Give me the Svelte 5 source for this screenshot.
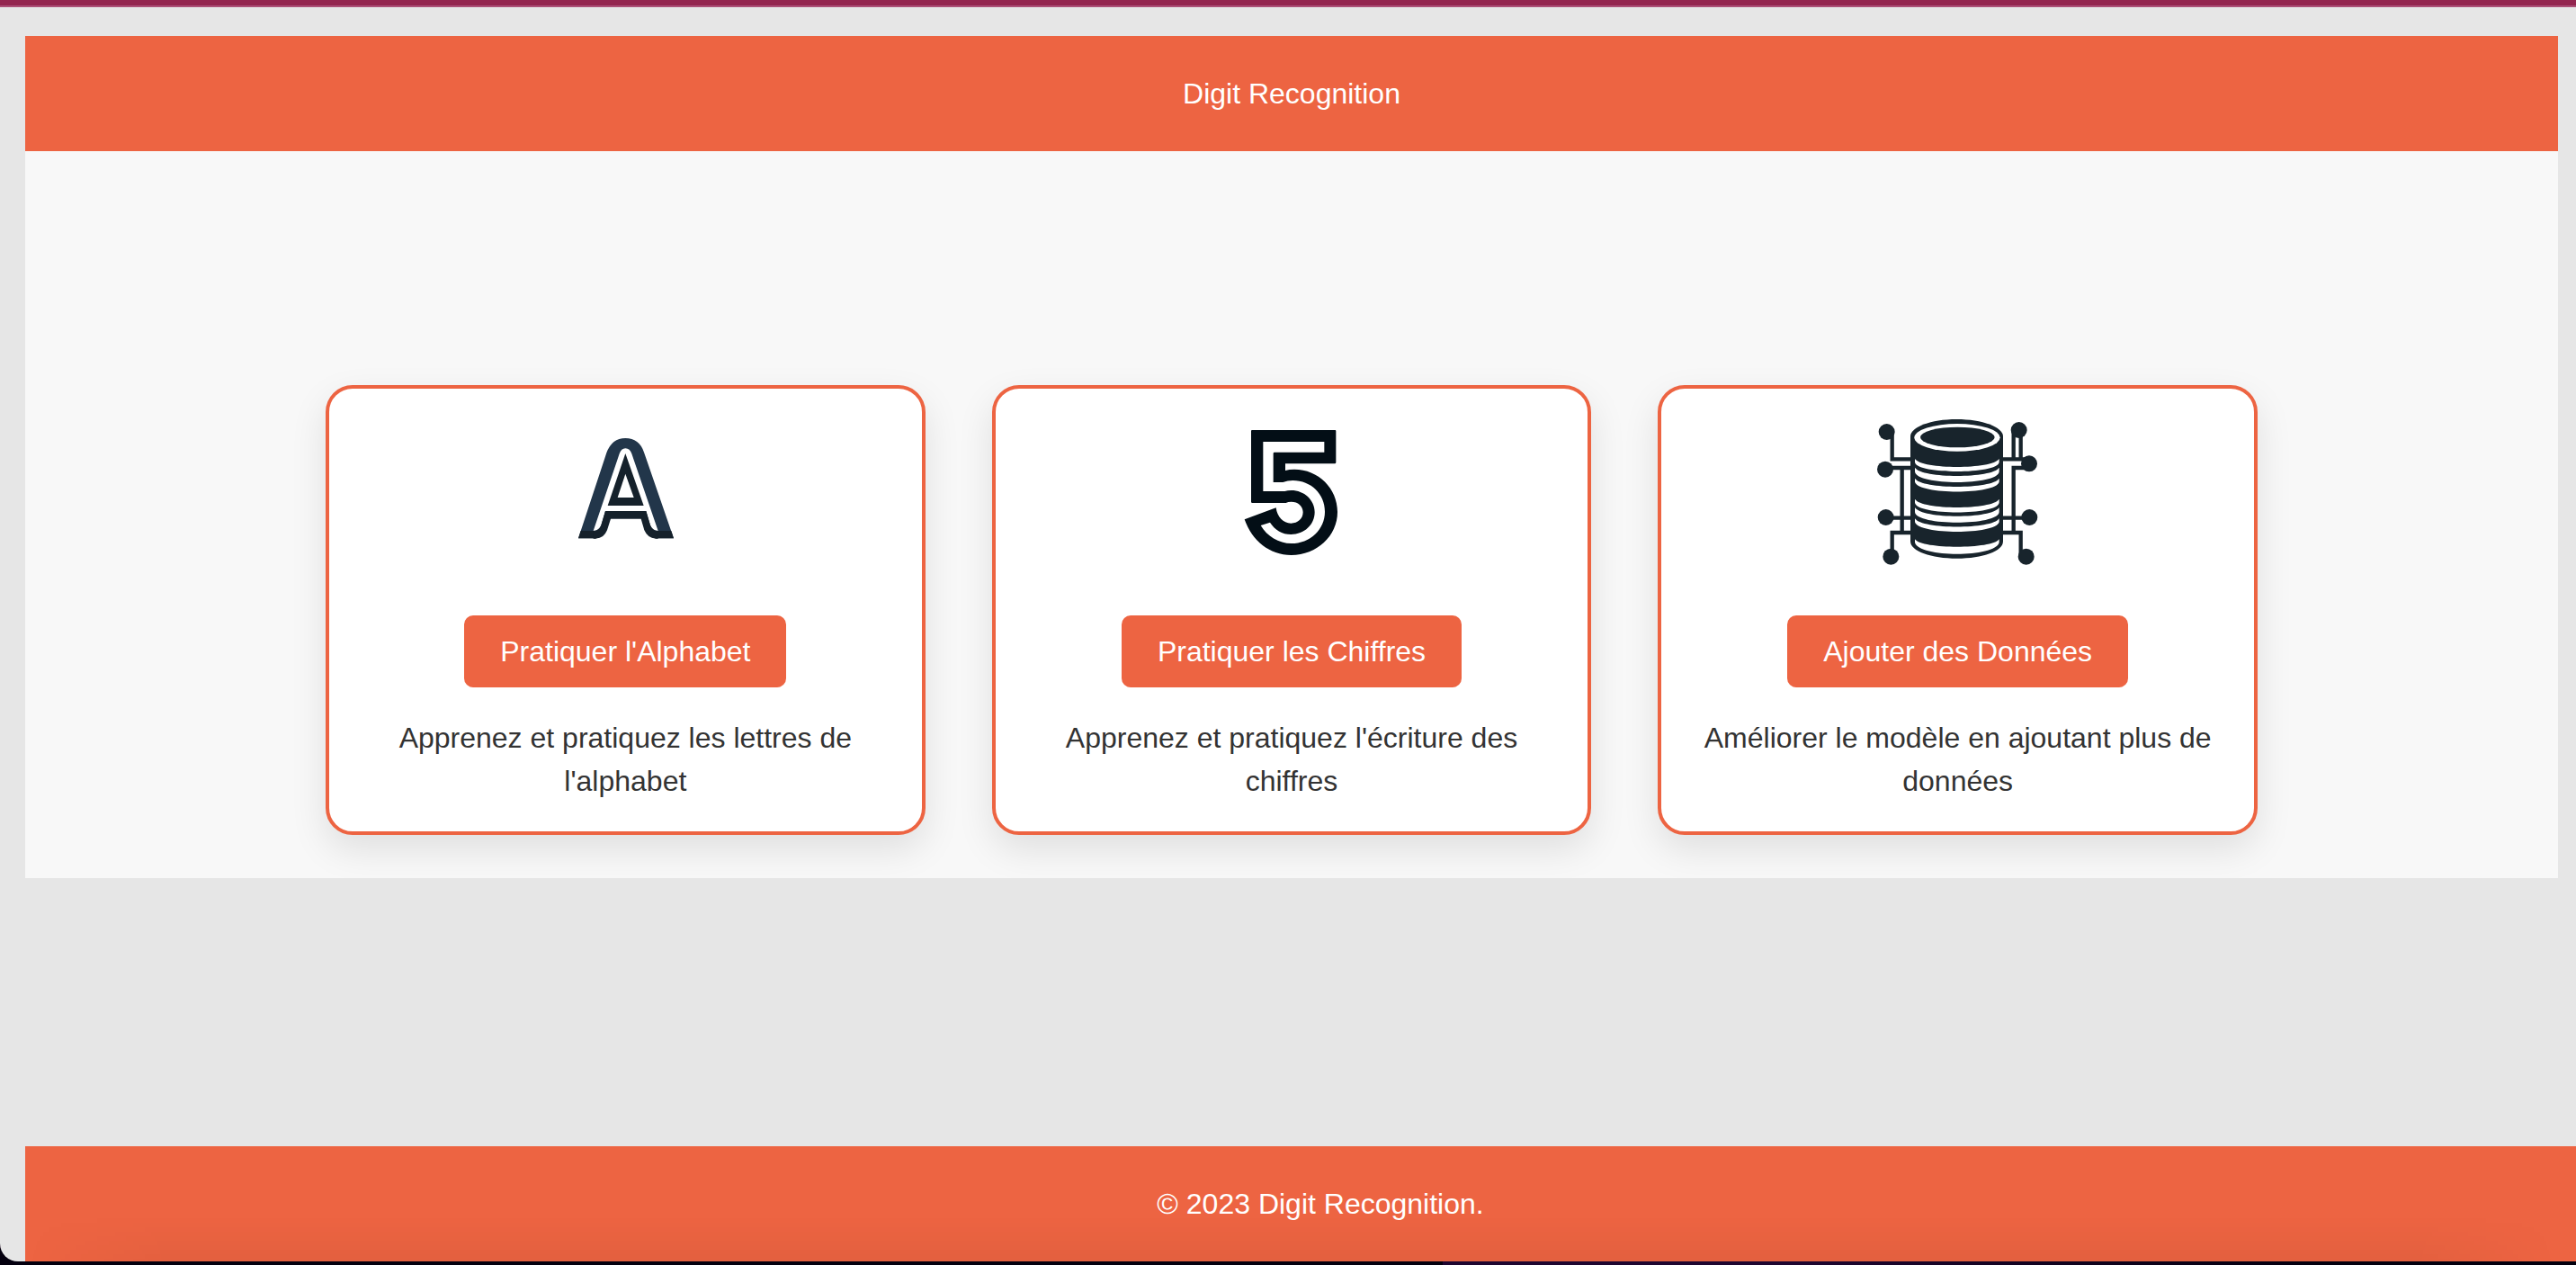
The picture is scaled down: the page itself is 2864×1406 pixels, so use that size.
<script>
  const cards = [
    { icon: 'letter', action: "Pratiquer l'Alphabet", text: "Apprenez et pratiquez les lettres de l'alphabet" },
    { icon: 'digit', action: 'Pratiquer les Chiffres', text: "Apprenez et pratiquez l'écriture des chiffres" },
    { icon: 'database', action: 'Ajouter des Données', text: 'Améliorer le modèle en ajoutant plus de données' }
  ];

  const nodes = [
    [112, 120], [107, 245], [109, 405], [126, 536],
    [553, 114], [587, 226], [588, 405], [577, 536]
  ];
</script>

<div class="screen">
  <div class="page">
    <header>Digit Recognition</header>

    <main>
      <div class="cards">
        {#each cards as card}
          <section class="card">
            {#if card.icon === 'letter'}
              <svg class="icon" viewBox="-14 42 600 564" aria-hidden="true">
                <path fill="#22364a" d="M130 445L224 160Q242 111 287 111Q333 111 349 158L448 445Z" />
                <path fill="#15212b" d="M138 420H440L448 445H130Z" />
                <path fill="#fff" d="M180 420L267 163Q273 145 287 145Q302 145 308 163L396 420Q377 419 370 401L356 354H220L206 401Q199 419 180 420Z" />
                <path fill="#15212b" d="M287 162L348 336H228Z" />
                <path fill="#fff" d="M287 230L315 309H261Z" />
                <path fill="#15212b" d="M220 354H356L370 401Q377 420 396 420V446H385Q362 445 350 418L339 380H238L226 418Q215 445 190 446H180V420Q199 420 206 401Z" />
                <path fill="#fff" d="M238 380H339L350 418Q362 445 387 446V450H189V446Q215 445 226 418Z" />
              </svg>
            {:else if card.icon === 'digit'}
              <svg class="icon" viewBox="-42 42 600 564" aria-hidden="true">
                <path fill="#030e16" d="M126 84H403Q406 84 406 87V192Q406 196 402 196H237V219Q250 215 267 215C347 215 411 278 411 357C411 437 342 501 257 501C184 501 126 453 101 382L206 343C210 374 230 395 256 395C279 395 296 379 296 358C296 337 279 323 257 323Q246 323 239 327H127Q123 327 123 323V87Q123 84 126 84Z" />
                <path fill="#fff" d="M163 123H367V158H201Q197 158 197 162V258H229Q245 252 262 252C323 252 369 298 369 356C369 416 319 462 257 462C215 462 176 438 155 402L186 392C201 416 227 432 256 432C300 432 335 400 335 358C335 317 300 285 257 285Q245 285 235 288H163Z" />
              </svg>
            {:else}
              <svg class="icon" viewBox="50 72 600 564" aria-hidden="true">
                <g fill="none" stroke="#18242c" stroke-width="13">
                  <path d="M130 130V211H196M107 240H196M163 240V456M109 407H196M196 456H130V536" />
                  <path d="M535 118V211M559 118V211M496 211H580M587 240H535V456M496 407H588M496 456H559V536" />
                </g>
                {#each nodes as [cx, cy]}
                  <circle {cx} {cy} r="27" fill="#18242c" />
                {/each}
                <path fill="#18242c" d="M191 135C191 104 259 78 345 78S500 104 500 135V485C500 517 432 542 346 542S191 517 191 485Z" />
                <ellipse cx="347" cy="139" rx="143" ry="46" fill="#fff" />
                <ellipse cx="348" cy="138" rx="124" ry="34" fill="#18242c" />
                <g fill="#fff">
                  <path d="M206 210C229 246 464 246 487 210V221C482 262 211 262 206 221Z" />
                  <path d="M206 239C229 276 464 276 487 239V253C482 300 211 300 206 253Z" />
                  <path d="M206 275C229 312 464 312 487 275V287C475 330 218 330 206 287Z" />
                  <path d="M206 344C229 381 464 381 487 344V356C482 399 211 399 206 356Z" />
                  <path d="M206 372C229 411 464 411 487 372V388C482 434 211 434 206 388Z" />
                  <path d="M206 409C229 446 464 446 487 409V421C475 464 218 464 206 421Z" />
                  <path d="M206 478C229 512 464 512 487 478V489C475 540 218 540 206 489Z" />
                </g>
              </svg>
            {/if}
            <button type="button">{card.action}</button>
            <p>{card.text}</p>
          </section>
        {/each}
      </div>
    </main>

    <footer>© 2023 Digit Recognition.</footer>
  </div>
</div>

<style>
  :global(body) {
    background: #04000f;
  }

  .screen,
  .screen * {
    box-sizing: border-box;
  }

  .screen {
    min-height: 100vh;
    padding-bottom: 4px;
    display: flex;
    overflow: hidden;
    background: linear-gradient(to right, transparent 56%, #1e0630 56%, #1e0630 70%, transparent 90%);
    font-family: 'Liberation Sans', Arial, sans-serif;
    font-size: 32px;
    line-height: 48px;
    color: #333;
  }

  .page {
    flex: 1;
    min-width: 0;
    display: flex;
    flex-direction: column;
    padding: 34px 20px 0 28px;
    border-top: 6px solid #93254f;
    border-bottom-left-radius: 20px;
    background: #e6e6e6;
    box-shadow: inset 0 2px #ac5077;
    overflow: hidden;
  }

  header,
  footer {
    padding: 40px;
    background: #ed6442;
    color: #fff;
    text-align: center;
  }

  main {
    padding: 260px 32px 48px;
    background: #f8f8f8;
    overflow: hidden;
  }

  .cards {
    display: grid;
    grid-template-columns: repeat(3, 1fr);
    gap: 74px;
    max-width: 2148px;
    margin: 0 auto;
  }

  .card {
    display: flex;
    flex-direction: column;
    align-items: center;
    gap: 32px;
    padding: 32px;
    border: 4px solid #ed6442;
    border-radius: 30px;
    background: #fff;
    box-shadow: 0 16px 40px rgba(0, 0, 0, 0.1);
    text-align: center;
  }

  .icon {
    width: 200px;
    height: 188px;
  }

  button {
    padding: 16px 40px;
    border: 0;
    border-radius: 10px;
    background: #ed6442;
    color: #fff;
    font: inherit;
    cursor: pointer;
  }

  p {
    margin: 0;
  }

  footer {
    position: relative;
    margin-top: auto;
    margin-right: -64px;
  }

  footer::after {
    content: '';
    position: absolute;
    inset: 60% 64px 0 0;
    background: linear-gradient(transparent, rgba(0, 0, 0, 0.04));
    mask-image: linear-gradient(to right, transparent, #000 160px, #000 calc(100% - 160px), transparent);
  }
</style>
